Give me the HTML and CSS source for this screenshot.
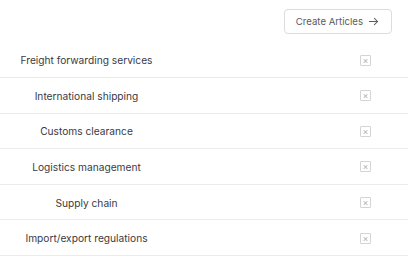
FILE: index.html
```html
<!DOCTYPE html>
<html lang="en">
<head>
    <meta charset="UTF-8">
    <meta name="viewport" content="width=device-width, initial-scale=1.0">
    <title>Articles</title>
    <link rel="stylesheet" href="styles.css">
</head>
<body>
    <div class="toolbar">
        <button class="create-btn">
            <span>Create Articles</span>
            <svg class="arrow" width="11" height="11" viewBox="0 0 12 12" fill="none" stroke="currentColor" stroke-width="1.1" stroke-linecap="round" stroke-linejoin="round">
                <path d="M1.5 6h9M7 2.5L10.5 6 7 9.5"/>
            </svg>
        </button>
    </div>

    <div class="topic-list">
        <div class="topic-row">
            <div class="topic-name">Freight forwarding services</div>
            <div class="topic-action"><span class="remove-box">&times;</span></div>
        </div>
        <div class="topic-row">
            <div class="topic-name">International shipping</div>
            <div class="topic-action"><span class="remove-box">&times;</span></div>
        </div>
        <div class="topic-row">
            <div class="topic-name">Customs clearance</div>
            <div class="topic-action"><span class="remove-box">&times;</span></div>
        </div>
        <div class="topic-row">
            <div class="topic-name">Logistics management</div>
            <div class="topic-action"><span class="remove-box">&times;</span></div>
        </div>
        <div class="topic-row">
            <div class="topic-name">Supply chain</div>
            <div class="topic-action"><span class="remove-box">&times;</span></div>
        </div>
        <div class="topic-row">
            <div class="topic-name">Import/export regulations</div>
            <div class="topic-action"><span class="remove-box">&times;</span></div>
        </div>
    </div>
</body>
</html>
```

FILE: styles.css
```css
* {
    margin: 0;
    padding: 0;
    box-sizing: border-box;
}

html, body {
    width: 100%;
    height: 100%;
    overflow: hidden;
    background-color: #ffffff;
    font-family: Inter, "Noto Sans", sans-serif;
    color: #3a3a44;
}

.toolbar {
    display: flex;
    justify-content: flex-end;
    height: 42.4px;
    padding: 9px 16px 0 0;
}

.create-btn {
    display: flex;
    align-items: center;
    gap: 5px;
    height: 24.5px;
    padding: 0 12px 0 11px;
    white-space: nowrap;
    font-family: Inter, "Noto Sans", sans-serif;
    font-size: 9.6px;
    color: #5a5a62;
    background-color: #ffffff;
    border: 1px solid #dcdcdf;
    border-radius: 4px;
    cursor: pointer;
}

.arrow {
    color: #5a5a62;
}

.topic-row {
    display: flex;
    align-items: center;
    height: 35.6px;
    padding-top: 1px;
    border-bottom: 1px solid #ececee;
}

.topic-name {
    width: 173px;
    text-align: center;
    font-size: 10.2px;
    color: #3a3a44;
}

.topic-action {
    flex: 1;
    display: flex;
    justify-content: flex-end;
    padding-right: 37px;
}

.remove-box {
    display: flex;
    align-items: center;
    justify-content: center;
    width: 11px;
    height: 11px;
    border: 1px solid #d4d4d6;
    border-radius: 1px;
    font-size: 9px;
    line-height: 1;
    color: #b0b0b4;
}
```
